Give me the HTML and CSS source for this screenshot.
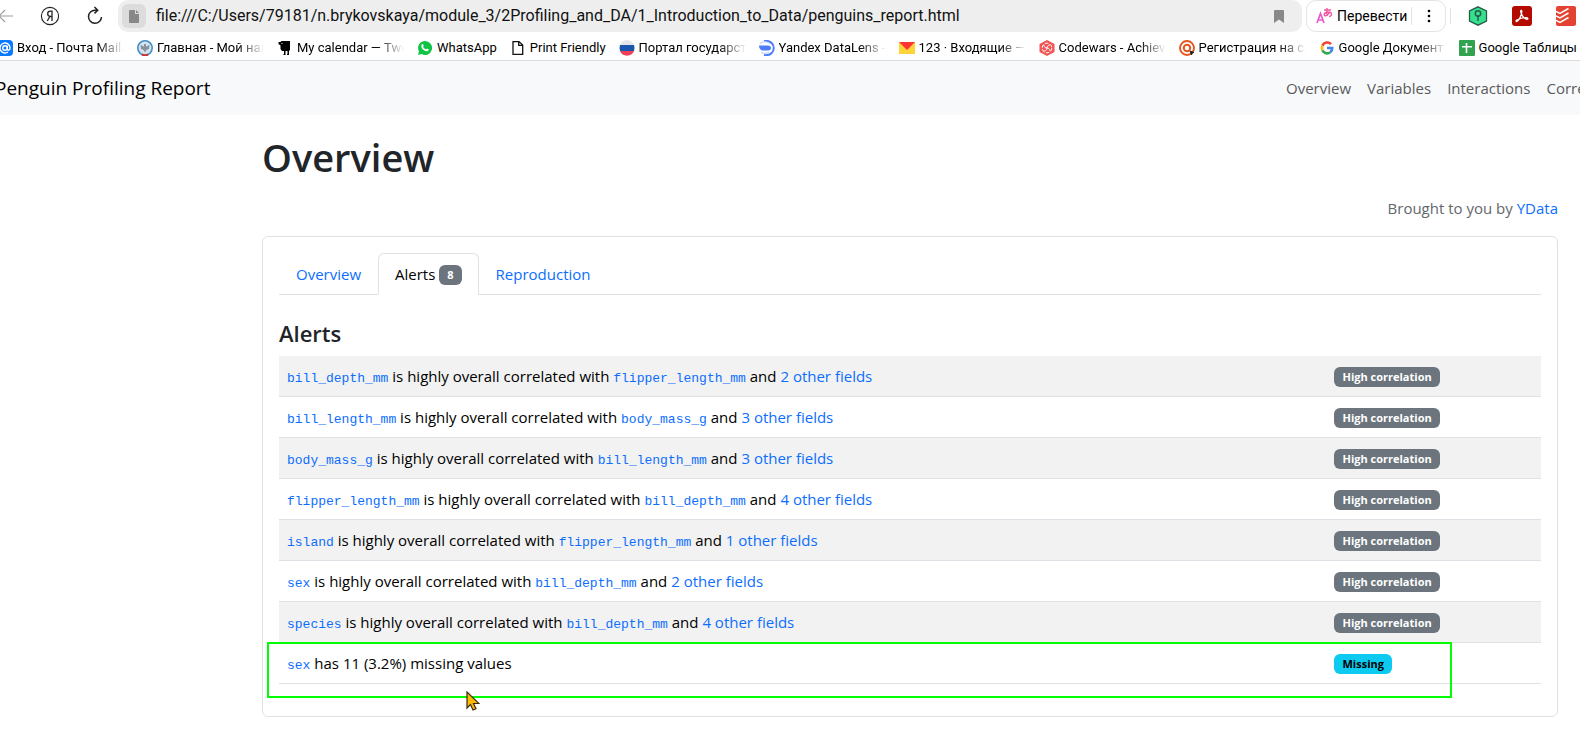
FILE: index.html
```html
<!DOCTYPE html>
<html lang="ru">
<head>
<meta charset="utf-8">
<title>Penguin Profiling Report</title>
<link rel="stylesheet" href="styles.css">
</head>
<body>
<header class="browser">
  <div class="toolbar">
    <div class="controls">
      <button class="tool" aria-label="Back"><svg width="18" height="18" viewBox="0 0 18 18" fill="none" stroke="#999" stroke-width="1.1"><path d="M17 9H3M9 3 3 9l6 6"/></svg></button>
      <button class="tool" aria-label="Home"><svg width="20" height="20" viewBox="0 0 20 20" fill="none" stroke="#222" stroke-width="1.1"><circle cx="10" cy="10" r="8.6"/><path d="M12 15V5.2h-1.600c-3.600 0-3.600 5.300 0 5.300H12M9.800 10.500 7.300 15" stroke-width="1.300"/></svg></button>
      <button class="tool" aria-label="Reload"><svg width="18" height="20" viewBox="0 0 18 20" fill="none" stroke="#222" stroke-width="1.500"><path d="M11 4.200H9A6.500 6.500 0 1 0 15.500 11M8.500 1 11.700 4.200 8.500 7.400"/></svg></button>
    </div>
    <div class="address">
      <span class="page-chip"><svg width="10" height="13" viewBox="0 0 10 13" fill="#888"><path d="M1 0h5v4h4v8a1 1 0 0 1-1 1H1a1 1 0 0 1-1-1V1a1 1 0 0 1 1-1zM7 0l3 3H7z"/></svg></span>
      <input class="url" type="text" aria-label="Address" value="file:///C:/Users/79181/n.brykovskaya/module_3/2Profiling_and_DA/1_Introduction_to_Data/penguins_report.html">
      <button class="tool" aria-label="Bookmark"><svg width="10" height="13" viewBox="0 0 10 13" fill="#888"><path d="M1 0h8a1 1 0 0 1 1 1v12L5 9.500 0 13V1a1 1 0 0 1 1-1z"/></svg></button>
    </div>
    <div class="translate">
      <button class="translate-button"><svg width="17" height="18" viewBox="0 0 17 18" fill="none" stroke-width="1.400"><path d="M1 16 4.500 6.500 8 16M2.200 13h4.600" stroke="#e85bd0" stroke-width="1.700"/><path d="M8 3h7M11 1c-.4 3-.4 5 .3 8M14 4.500c-1 3-5.500 6-5.800 3.200C8 5 15 4 15.500 6.800c.3 1.700-1.300 2.500-2.500 2.700" stroke="#f2559f"/></svg><span>Перевести</span></button>
      <button class="more" aria-label="More"><svg width="4" height="14" viewBox="0 0 4 14"><circle cx="2" cy="2" r="1.300"/><circle cx="2" cy="7" r="1.300"/><circle cx="2" cy="12" r="1.300"/></svg></button>
    </div>
    <div class="extensions">
      <button class="tool" aria-label="Passwords"><svg width="20" height="20" viewBox="0 0 20 20"><path d="M10 .8 18.500 5v10L10 19.200 1.500 15V5z" fill="#35e08e" stroke="#285c49" stroke-width="1.300"/><circle cx="10" cy="7.500" r="2.700" fill="none" stroke="#285c49" stroke-width="1.500"/><path d="M9.300 9.500h1.400V15H9.300z" fill="#285c49"/></svg></button>
      <button class="tool" aria-label="PDF"><svg width="20" height="20" viewBox="0 0 20 20"><rect width="20" height="20" rx="3" fill="#b30b00"/><path d="M4.500 15.500c2-.3 5.500-6 5.300-10.300 0-1.500-1.500-1-1 .8.800 3.500 3.500 7 6.200 7.300 1.500 0 1-1.700-.8-1.700-3 0-7 1-9.400 2.500-.8.500-1 1.400-.3 1.400z" fill="none" stroke="#fff" stroke-width="1.300"/></svg></button>
      <button class="tool" aria-label="Todoist"><svg width="20" height="20" viewBox="0 0 20 20"><rect width="20" height="20" rx="2" fill="#e44332"/><path d="M0 5.500 4 7.500 12.500 2.500M0 10l4 2 8.500-5M0 14.500l4 2 8.500-5" fill="none" stroke="#fff" stroke-width="1.500"/></svg></button>
    </div>
  </div>
  <nav class="bookmarks" aria-label="Bookmarks">
    <a href="#"><svg viewBox="0 0 16 16"><rect width="16" height="16" rx="4" fill="#0a78ff"/><circle cx="8" cy="8" r="2.300" fill="none" stroke="#fff" stroke-width="1.400"/><path d="M10.300 5.700V9c0 2 2.700 1.500 2.700-1A5 5 0 1 0 11 12" fill="none" stroke="#fff" stroke-width="1.400"/></svg><span class="clip">Вход - Почта Mail.</span></a>
    <a href="#"><svg viewBox="0 0 16 16"><circle cx="8" cy="8" r="7.200" fill="#d8e3ea" stroke="#3f8fca" stroke-width="1.600"/><path d="M3.500 5 7 6.500V4h2v2.500L12.500 5 12 9l-2.500 1L8 12.500 6.500 10 4 9z" fill="#8793a0"/><path d="M5 14.500c2 1 4 1 6 0" stroke="#c33" stroke-width="2" fill="none"/></svg><span class="clip">Главная - Мой нал</span></a>
    <a href="#"><svg viewBox="0 0 16 16"><path d="M1.500 2h2l1-1h8.500v9.500h-1V15H10v-1h.5v-3H8.500v4H6.500v-1H7v-3H5L3.500 9V5.500L1.500 4z"/><circle cx="5" cy="3.500" r=".6" fill="#fff"/></svg><span class="clip">My calendar — Twe</span></a>
    <a href="#"><svg viewBox="0 0 16 16"><path d="M8 1a7 7 0 1 1-3.400 13.100L1 15l1-3.500A7 7 0 0 1 8 1z" fill="#10c443"/><path d="M5 4.300c.8-.6 1.300.2 1.700 1.300.2.700-.9.900-.4 1.600.7 1 1.500 1.700 2.500 2 .6.200.8-1 1.400-.8 1.300.6 1.800.8 1.500 1.600-.8 1.700-3 1.500-4.800.2C5 8.800 3.300 6.100 5 4.300z" fill="#fff"/></svg><span>WhatsApp</span></a>
    <a href="#"><svg viewBox="0 0 16 16" fill="none" stroke="#111" stroke-width="1.300"><path d="M3 1.600h6L12.700 5v9.400H3zM8.700 1.600V5.400h4"/></svg><span>Print Friendly</span></a>
    <a href="#"><svg viewBox="0 0 16 16"><path d="M1 5a7.600 7.600 0 0 1 14 0z" fill="#e6e6ea"/><path d="M1 5h14q1 3 0 6H1Q0 8 1 5z" fill="#1b57ad"/><path d="M1 11h14a7.600 7.600 0 0 1-14 0z" fill="#ee3e58"/></svg><span class="clip">Портал государст</span></a>
    <a href="#"><svg viewBox="0 0 16 16" fill="none"><path d="M5 1c13-2 13 16 0 14" stroke="#4d7dfa" stroke-width="2"/><path d="M0 5.500h9c4 0 4 5 0 5H3Q0 9 0 5.500z" fill="#4d7dfa"/><path d="M1 4c2-3 8-3 10 0M2 12c2 2 6 2 8 0" stroke="#c5d4ff" stroke-width="1.200"/></svg><span class="clip">Yandex DataLens -</span></a>
    <a href="#"><svg viewBox="0 0 16 16"><path d="M0 2h16v12H0z" fill="#ffd43a"/><path d="M0 2h16L8 10z" fill="#f33"/></svg><span class="clip">123 · Входящие —</span></a>
    <a href="#"><svg viewBox="0 0 16 16"><path d="M8 0l7.500 4v8L8 16 .5 12V4z" fill="#f05656"/><g fill="none" stroke="#fff"><circle cx="8" cy="8" r="4.800" stroke-dasharray="3.500 1.500"/><path d="M8 8c0-3 3-3 3-3M8 8c3 0 3 3 3 3M8 8c0 3-3 3-3 3M8 8C5 8 5 5 5 5"/></g></svg><span class="clip">Codewars - Achiev</span></a>
    <a href="#"><svg viewBox="0 0 16 16" fill="none" stroke="#e3571e"><circle cx="8" cy="8" r="7" stroke-width="1.900"/><circle cx="8" cy="8" r="3.200" stroke-width="2"/><path d="M11 11l4 1.500-2 .5-.5 2z" fill="#222" stroke="#222"/></svg><span class="clip">Регистрация на са</span></a>
    <a href="#"><svg viewBox="0 0 16 16" fill="none" stroke-width="2.600"><path d="M12 4.200A5.200 5.200 0 0 0 3.400 5.600" stroke="#ea4335"/><path d="M3.400 5.600a5.200 5.200 0 0 0 0 4.800" stroke="#fbbc05"/><path d="M3.400 10.400a5.200 5.200 0 0 0 7.900 1.800" stroke="#34a853"/><path d="M11.300 12.200A5 5 0 0 0 13.200 8H8" stroke="#4285f4"/></svg><span class="clip">Google Документ</span></a>
    <a href="#"><svg viewBox="0 0 16 16"><rect width="16" height="16" rx="1" fill="#31a350"/><path d="M7.500 3v10M3 6.700h10" stroke="#fff" stroke-width="1.600"/></svg><span>Google Таблицы</span></a>
  </nav>
</header>

<div class="navbar">
  <a class="brand" href="#">Penguin Profiling Report</a>
  <nav class="sections" aria-label="Report sections">
    <a href="#">Overview</a>
    <a href="#">Variables</a>
    <a href="#">Interactions</a>
    <a href="#">Correlations</a>
  </nav>
</div>

<main class="report">
  <h1>Overview</h1>
  <p class="credit">Brought to you by <a href="#">YData</a></p>
  <section class="card">
    <div class="tabs" role="tablist">
      <button class="tab" role="tab">Overview</button>
      <button class="tab active" role="tab" aria-selected="true">Alerts <span class="badge">8</span></button>
      <button class="tab" role="tab">Reproduction</button>
    </div>
    <h2>Alerts</h2>
    <table class="alerts">
      <tbody>
        <tr><td><a href="#"><code>bill_depth_mm</code></a> is highly overall correlated with <a href="#"><code>flipper_length_mm</code></a> and <a href="#">2 other fields</a></td><td><span class="badge">High correlation</span></td></tr>
        <tr><td><a href="#"><code>bill_length_mm</code></a> is highly overall correlated with <a href="#"><code>body_mass_g</code></a> and <a href="#">3 other fields</a></td><td><span class="badge">High correlation</span></td></tr>
        <tr><td><a href="#"><code>body_mass_g</code></a> is highly overall correlated with <a href="#"><code>bill_length_mm</code></a> and <a href="#">3 other fields</a></td><td><span class="badge">High correlation</span></td></tr>
        <tr><td><a href="#"><code>flipper_length_mm</code></a> is highly overall correlated with <a href="#"><code>bill_depth_mm</code></a> and <a href="#">4 other fields</a></td><td><span class="badge">High correlation</span></td></tr>
        <tr><td><a href="#"><code>island</code></a> is highly overall correlated with <a href="#"><code>flipper_length_mm</code></a> and <a href="#">1 other fields</a></td><td><span class="badge">High correlation</span></td></tr>
        <tr><td><a href="#"><code>sex</code></a> is highly overall correlated with <a href="#"><code>bill_depth_mm</code></a> and <a href="#">2 other fields</a></td><td><span class="badge">High correlation</span></td></tr>
        <tr><td><a href="#"><code>species</code></a> is highly overall correlated with <a href="#"><code>bill_depth_mm</code></a> and <a href="#">4 other fields</a></td><td><span class="badge">High correlation</span></td></tr>
        <tr><td><a href="#"><code>sex</code></a> has 11 (3.2%) missing values</td><td><span class="badge info">Missing</span></td></tr>
      </tbody>
    </table>
    <div class="highlight"></div>
    <svg class="pointer" width="14" height="20" viewBox="0 0 14 20"><path d="M1 1v16l3.500-3.500L7 19l3-1.300L7.500 12.500H13z" fill="#ffb900" stroke="#3a2c10" stroke-width="1.200"/></svg>
  </section>
</main>
</body>
</html>
```

FILE: styles.css
```css
* { box-sizing: border-box; }

body {
  margin: 0;
  background: #fff;
  color: #000;
  font: 15px/24px "Open Sans", "Noto Sans", sans-serif;
  overflow-x: hidden;
}

a { color: #0d6efd; text-decoration: none; }

button {
  padding: 0;
  border: 0;
  background: none;
  color: inherit;
  font: inherit;
}

svg { display: block; flex: none; }

/* Browser chrome */
.browser {
  height: 61px;
  border-bottom: 1px solid #dadce0;
  font-family: Roboto, "Noto Sans", sans-serif;
  overflow: hidden;
}

.toolbar { display: flex; height: 32px; }

.controls {
  display: flex;
  align-items: center;
  gap: 26px;
  width: 122px;
  margin-left: -4px;
}

.address {
  display: flex;
  flex: 1;
  align-items: center;
  gap: 10px;
  padding: 0 18px 0 4px;
  border-radius: 10px;
  background: #eee;
}

.page-chip {
  display: flex;
  align-items: center;
  justify-content: center;
  width: 24px;
  height: 24px;
  border-radius: 6px;
  background: #dcdcdc;
}

.url {
  flex: 1;
  min-width: 0;
  padding: 0;
  border: 0;
  background: none;
  color: #111;
  font: 16px/24px Roboto, "Noto Sans", sans-serif;
}

.translate {
  display: flex;
  align-items: center;
  width: 140px;
  margin-left: 4px;
  border: 1px solid #e3e3e3;
  border-radius: 10px;
}

.translate-button {
  display: flex;
  align-items: center;
  gap: 4px;
  width: 105px;
  padding-left: 9px;
  border-right: 1px solid #e3e3e3;
  font-size: 14px;
  line-height: 18px;
}

.more { display: flex; flex: 1; justify-content: center; }

.extensions {
  display: flex;
  align-items: center;
  gap: 24px;
  margin: 8px 4px 8px 4px;
  padding-left: 17px;
  border-left: 1px solid #e3e3e3;
}

.bookmarks {
  display: flex;
  gap: 13px;
  height: 28px;
  margin-left: -3px;
  padding-top: 4px;
}

.bookmarks a {
  display: flex;
  flex: none;
  align-items: center;
  gap: 4px;
  height: 24px;
  color: #000;
  font-size: 13px;
  white-space: nowrap;
}

.bookmarks svg { width: 16px; height: 16px; }

.clip {
  width: 107px;
  overflow: hidden;
  -webkit-mask-image: linear-gradient(to right, #000 75%, transparent);
  mask-image: linear-gradient(to right, #000 75%, transparent);
}

/* Report */
.navbar {
  display: flex;
  align-items: center;
  justify-content: space-between;
  height: 54px;
  background: #f8f9fa;
  overflow: hidden;
}

.brand { margin-left: -5px; color: #000; font-size: 19px; }

.sections {
  display: flex;
  gap: 16px;
  width: 294px;
  overflow: hidden;
}

.sections a { color: #595a5b; }

.report { padding: 18px 22px 19px 262px; }

h1, h2 { margin: 0; color: #212529; font-weight: 600; }

h1 { font-size: 38px; line-height: 48px; }

.credit {
  margin: 15px 0 16px;
  color: #62676c;
  text-align: right;
}

.card {
  position: relative;
  padding: 16px 16px 32px;
  border: 1px solid #dee2e6;
  border-radius: 6px;
}

.tabs {
  display: flex;
  height: 42px;
  border-bottom: 1px solid #dee2e6;
}

.tab {
  height: 42px;
  padding: 0 16px;
  border: 1px solid transparent;
  color: #0d6efd;
}

.tab.active {
  border-color: #dee2e6 #dee2e6 #fff;
  border-radius: 6px 6px 0 0;
  background: #fff;
  color: #000;
}

h2 { margin-top: 24px; padding-bottom: 8px; font-size: 22px; line-height: 29px; }

.alerts {
  width: 100%;
  border-collapse: separate;
  border-spacing: 0;
  table-layout: fixed;
}

.alerts td {
  height: 41px;
  padding: 0 8px;
  border-bottom: 1px solid #dee2e6;
}

.alerts td:last-child { width: 17%; }

.alerts tr:nth-child(odd) { background: #f2f2f2; }

code { font: 13px "Liberation Mono", monospace; }

.badge {
  display: inline-block;
  padding: 4px 8px;
  border-radius: 6px;
  background: #6c757d;
  color: #fff;
  font-size: 11px;
  font-weight: 700;
  line-height: 12px;
  vertical-align: 1px;
}

.badge.info { background: #0dcaf0; color: #000; }

.highlight {
  position: absolute;
  left: 4px;
  right: 105px;
  bottom: 18px;
  height: 56px;
  border: 2px solid #0f0;
}

.pointer { position: absolute; left: 203px; bottom: 5px; }
```
